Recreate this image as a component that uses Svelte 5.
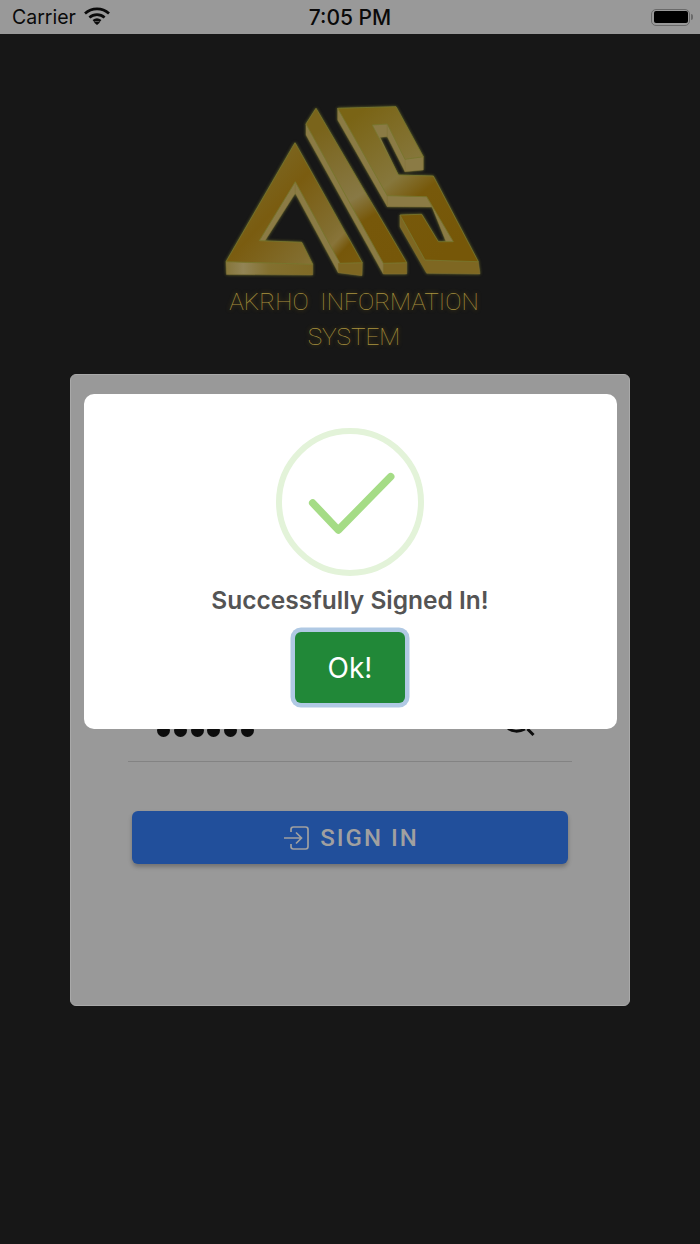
<script>
  const dots = [0, 1, 2, 3, 4, 5];
</script>

<div class="page">
  <header class="status">
    <div class="left">
      <span class="carrier">Carrier</span>
      <svg class="wifi" viewBox="0 0 26 18" width="26" height="18">
        <path d="M1 6.6C7.8 .4 18.2 .4 25 6.6" />
        <path d="M5.4 10.6C9.8 6.7 16.2 6.7 20.6 10.6" />
        <path d="M9.4 14C11.6 12.3 14.4 12.3 16.6 14" />
        <path class="tip" d="M13 18l-3-2.6c1.8-1.2 4.2-1.2 6 0z" />
      </svg>
    </div>
    <span class="time">7:05 PM</span>
    <div class="battery">
      <div class="shell"><div class="fill"></div></div>
      <div class="nub"></div>
    </div>
  </header>

  <div class="logo">
    <svg class="mark" viewBox="215 100 270 180" width="270" height="180">
      <defs>
        <linearGradient id="ga" gradientUnits="userSpaceOnUse" x1="240" y1="170" x2="350" y2="270">
          <stop offset="0" stop-color="#7c6a28" />
          <stop offset=".35" stop-color="#7a5c10" />
          <stop offset=".72" stop-color="#826e30" />
          <stop offset=".8" stop-color="#887439" />
          <stop offset=".88" stop-color="#76570a" />
          <stop offset="1" stop-color="#785a0e" />
        </linearGradient>
        <linearGradient id="gi" gradientUnits="userSpaceOnUse" x1="320" y1="130" x2="400" y2="260">
          <stop offset="0" stop-color="#7a641b" />
          <stop offset=".5" stop-color="#887945" />
          <stop offset=".66" stop-color="#77580a" />
          <stop offset="1" stop-color="#765709" />
        </linearGradient>
        <linearGradient id="gs" gradientUnits="userSpaceOnUse" x1="350" y1="120" x2="450" y2="250">
          <stop offset="0" stop-color="#7a6415" />
          <stop offset=".45" stop-color="#86773c" />
          <stop offset=".62" stop-color="#77590b" />
          <stop offset="1" stop-color="#765708" />
        </linearGradient>
        <linearGradient id="gf" gradientUnits="userSpaceOnUse" x1="226" y1="268" x2="312" y2="268">
          <stop offset="0" stop-color="#85753a" />
          <stop offset=".2" stop-color="#928455" />
          <stop offset=".5" stop-color="#83702f" />
          <stop offset="1" stop-color="#7f6a26" />
        </linearGradient>
      </defs>

      <g class="side">
        <polygon fill="url(#gf)" points="226,261.7 312.7,264.3 312.7,275 226.5,274.5" />
        <polygon points="259.3,240.7 295.3,181.7 295.3,193.3 265,240.7" />
        <polygon points="295.3,181.7 340,263 338.3,272.7 295.3,193.3" />
        <polygon class="deep" points="338,263 362.3,262.7 362,275.7 338.3,272.7" />
        <polygon points="306,124 383.3,263.3 383.3,274 306,135" />
        <polygon class="deep" points="383.3,263.3 406.7,262.7 406.7,274 383.3,274" />
        <polygon points="337.7,108.3 387.3,195.7 387.3,206.7 337.7,120" />
        <polygon points="387.3,195.7 426.7,196.7 432,207 387.3,206.7" />
        <polygon points="405,159.3 423.3,156.7 423.3,170 405,171.7" />
        <polygon points="372.3,125 387.3,124 387.3,136.7 380,137.3 398.3,175 390,172" />
        <polygon points="387.3,124 405,159.3 405,171.7 387.3,136.7" />
        <polygon points="426.7,196.7 453.3,241.7 446,241.7 432,207" />
        <polygon class="deep" points="400,215 425,260 478.3,261.7 480,274 426.7,273.3 400,226.7" />
      </g>

      <g class="top">
        <polygon fill="url(#ga)" points="295,142.7 362.3,262.7 340,263.3 295.3,181.7 259.3,240.7 301.7,242.3 312.7,264.3 226,261.7" />
        <polygon fill="url(#gi)" points="316,108.3 406.7,262.7 383.3,263.3 306,124" />
        <polygon fill="url(#gs)" points="337.7,108.3 396,106.7 423.3,156.7 405,159.3 387.3,124 372.3,125 398.3,175 433.3,176 478.3,261.7 425,260 400,215 421.7,214.3 438.3,241.7 453.3,241.7 426.7,196.7 387.3,195.7" />
      </g>
    </svg>
    <div class="wordmark">
      <span class="word">AKRHO  INFORMATION</span>
      <span class="word">SYSTEM</span>
    </div>
  </div>

  <main class="card">
    <form class="form">
      <div class="field">
        <div class="dots">
          {#each dots as d (d)}
            <span class="dot"></span>
          {/each}
        </div>
        <svg class="eye" viewBox="0 0 30 22" width="30" height="22">
          <path d="M3 13C7 17 14 17 20 14" />
          <path d="M22.5 14l6 6" />
        </svg>
      </div>
      <button type="button" class="signin">
        <svg viewBox="0 0 27 24" width="27" height="24">
          <path d="M8 6V3.4C8 2.1 9 1 10.4 1h12.2C24 1 25 2.1 25 3.4v17.2c0 1.3-1 2.4-2.4 2.4H10.4C9 23 8 21.9 8 20.6V18" />
          <path d="M1 12h17M13 6.5l5.5 5.5-5.5 5.5" />
        </svg>
        <span>SIGN IN</span>
      </button>
    </form>
  </main>

  <div class="modal">
    <svg class="check" viewBox="0 0 148 148" width="148" height="148">
      <circle class="ring" cx="74" cy="74" r="71" />
      <path class="tick" d="M36.700 75L62.300 102 114.700 48.700" />
    </svg>
    <h2>Successfully Signed In!</h2>
    <button type="button" class="ok">Ok!</button>
  </div>
</div>

<style>
  :global(body) {
    margin: 0;
    background: #171717;
  }
  .page {
    position: relative;
    width: 700px;
    height: 1244px;
    background: #171717;
    font-family: Inter, "Liberation Sans", sans-serif;
    overflow: hidden;
    display: flex;
    flex-direction: column;
    align-items: center;
  }
  .status {
    align-self: stretch;
    height: 34px;
    background: #999;
    color: #0a0a0a;
    position: relative;
    display: flex;
    align-items: center;
    justify-content: space-between;
    padding: 0 7px 0 12px;
    font-size: 19.500px;
  }
  .left {
    display: flex;
    align-items: center;
    gap: 8px;
  }
  .carrier {
    font-weight: 400;
  }
  .wifi {
    margin-top: -3px;
  }
  .wifi path {
    fill: none;
    stroke: #0a0a0a;
    stroke-width: 2.700;
  }
  .wifi .tip {
    fill: #0a0a0a;
    stroke: none;
  }
  .time {
    position: absolute;
    left: 0;
    right: 0;
    text-align: center;
    font-weight: 500;
    font-size: 21px;
  }
  .battery {
    display: flex;
    align-items: center;
    gap: 1px;
  }
  .shell {
    width: 39px;
    height: 17px;
    box-sizing: border-box;
    border: 1.500px solid #6a6a6a;
    border-radius: 5px;
    padding: 1.500px;
  }
  .fill {
    height: 100%;
    background: #000;
    border-radius: 2px;
  }
  .nub {
    width: 2px;
    height: 6px;
    background: #6a6a6a;
    border-radius: 0 2px 2px 0;
  }
  .logo {
    margin-top: 66px;
    display: flex;
    flex-direction: column;
    align-items: center;
  }
  .mark {
    display: block;
    filter: drop-shadow(0 0 1.500px #6f6f2a);
  }
  .side polygon {
    fill: #8b7b45;
    stroke: #86763c;
    stroke-width: 0.400;
  }
  .side polygon[fill] {
    fill: url(#gf);
  }
  .side .deep {
    fill: #7e6722;
  }
  .top polygon {
    stroke: #77772f;
    stroke-width: 0.800;
    stroke-linejoin: round;
  }
  .wordmark {
    margin-top: 4px;
    padding-left: 8px;
    display: flex;
    flex-direction: column;
    align-items: center;
    font-family: Roboto, "Liberation Sans", sans-serif;
    font-weight: 100;
    font-size: 24.400px;
    line-height: 35px;
    color: #a8923f;
    text-shadow: 0 0 4px #6b5812;
  }
  .word {
    white-space: pre;
  }
  .card {
    margin-top: 20px;
    width: 560px;
    height: 632px;
    box-sizing: border-box;
    background: #999;
    border: 1px solid #a9a9a9;
    border-radius: 6px;
    padding: 0 57px;
  }
  .form {
    margin-top: 340px;
    display: flex;
    flex-direction: column;
  }
  .field {
    height: 46px;
    border-bottom: 1px solid #838383;
    display: flex;
    justify-content: space-between;
    padding: 0 37px 0 29px;
  }
  .dots {
    display: flex;
    gap: 3.800px;
    margin-top: 9px;
  }
  .dot {
    width: 13px;
    height: 13px;
    border-radius: 50%;
    background: #0d0d0d;
  }
  .eye path {
    fill: none;
    stroke: #0d0d0d;
    stroke-width: 3;
  }
  .signin {
    margin: 49px 4px 0;
    padding: 0 0 0 2px;
    height: 53px;
    border: 0;
    border-radius: 6px;
    background: #214f9b;
    box-shadow: 0 3px 4px rgba(0, 0, 0, 0.25);
    color: #a0a0a0;
    font-family: Roboto, Inter, "Liberation Sans", sans-serif;
    font-size: 24px;
    font-weight: 500;
    letter-spacing: 2px;
    display: flex;
    align-items: center;
    justify-content: center;
    gap: 10px;
  }
  .signin svg path {
    fill: none;
    stroke: #a0a0a0;
    stroke-width: 1.700;
  }
  .modal {
    position: absolute;
    left: 84px;
    top: 394px;
    width: 533px;
    height: 335px;
    box-sizing: border-box;
    padding: 34px 1px 0 0;
    background: #fff;
    border-radius: 10px;
    display: flex;
    flex-direction: column;
    align-items: center;
  }
  .check {
    display: block;
  }
  .ring {
    fill: none;
    stroke: #e3f3d9;
    stroke-width: 6;
  }
  .tick {
    fill: none;
    stroke: #a5dc86;
    stroke-width: 7.500;
    stroke-linecap: round;
    stroke-linejoin: round;
  }
  h2 {
    margin: 9px 0 0;
    font-size: 24.500px;
    line-height: 30px;
    font-weight: 600;
    color: #545454;
  }
  .ok {
    margin-top: 17px;
    width: 110px;
    height: 71px;
    box-sizing: border-box;
    border: 0;
    border-radius: 6px;
    background: #218838;
    color: #fff;
    font-family: Inter, "Liberation Sans", sans-serif;
    font-size: 28px;
    font-weight: 400;
    box-shadow: 0 0 0 4.500px #b0c9e4;
    padding: 0;
  }
</style>
